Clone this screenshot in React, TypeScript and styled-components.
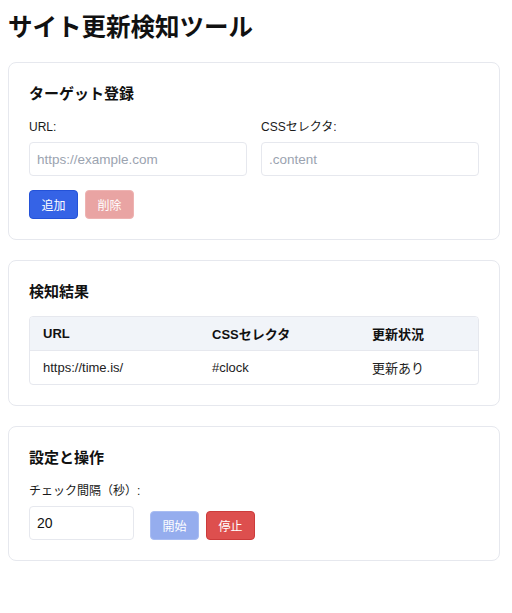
import styled, { createGlobalStyle } from "styled-components";

const GlobalStyle = createGlobalStyle`
    body {
        margin: 8px;
        background: #fff;
        color: #111;
        font-family: "Liberation Sans", "Noto Sans CJK JP", sans-serif;
    }
    * {
        box-sizing: border-box;
    }
`;

const Page = styled.main`
    width: 492px;
`;

const Title = styled.h1`
    font-size: 24.5px;
    font-weight: 700;
    line-height: 34px;
    margin: 3px 0 17px;
`;

const Card = styled.section`
    border: 1px solid #e6e8ee;
    border-radius: 8px;
    padding: 20px;
    margin-bottom: 20px;
`;

const CardTitle = styled.h2`
    font-size: 15px;
    font-weight: 700;
    line-height: 22px;
    margin: 0 0 13px;
`;

const FieldGrid = styled.div`
    display: grid;
    grid-template-columns: 1fr 1fr;
    gap: 14px;
`;

const Field = styled.div`
    display: flex;
    flex-direction: column;
    gap: 6px;
`;

const Label = styled.label`
    font-size: 12px;
    line-height: 18px;
    color: #1a1a1a;
`;

const Input = styled.input<{ $width?: number }>`
    height: 34px;
    width: ${({ $width }) => ($width ? `${$width}px` : "100%")};
    border: 1px solid #e6e8ee;
    border-radius: 4px;
    padding: 0 7px;
    font-size: 13.5px;
    font-family: inherit;
    color: #111;
    background: #fff;
    outline: none;

    &::placeholder {
        color: #9ba3b0;
    }
`;

const IntervalInput = styled(Input)`
    margin-right: 9px;
    font-size: 14px;
`;

const ButtonRow = styled.div<{ $top?: number }>`
    display: flex;
    align-items: flex-end;
    gap: 7px;
    margin-top: ${({ $top }) => $top ?? 0}px;
`;

const colors = {
    blue: { bg: "#3563e6", border: "#2452d8" },
    red: { bg: "#dd4f4e", border: "#cc3b3b" },
    blueOff: { bg: "#95adee", border: "#a9bdf2" },
    redOff: { bg: "#e9a4a3", border: "#eeb3b2" },
};

const Button = styled.button<{ $tone: keyof typeof colors }>`
    height: 29px;
    width: 49px;
    padding: 0;
    border-radius: 4px;
    border: 1px solid ${({ $tone }) => colors[$tone].border};
    background: ${({ $tone }) => colors[$tone].bg};
    color: #fff;
    font-size: 12px;
    font-family: inherit;
    cursor: pointer;

    &:disabled {
        cursor: default;
    }
`;

const Table = styled.table`
    width: 100%;
    border-collapse: separate;
    border-spacing: 0;
    border: 1px solid #e6e8ee;
    border-radius: 4px;
    overflow: hidden;
`;

const Th = styled.th<{ $w?: number }>`
    text-align: left;
    font-size: 13px;
    font-weight: 700;
    background: #f1f4f9;
    padding: 0 13px;
    height: 34px;
    border-bottom: 1px solid #e6e8ee;
    width: ${({ $w }) => ($w ? `${$w}px` : "auto")};
`;

const Td = styled.td`
    padding: 0 13px;
    height: 33px;
    font-size: 13px;
    color: #222;
`;

const App = () => {
    return (
        <Page>
            <GlobalStyle />
            <Title>サイト更新検知ツール</Title>

            <Card>
                <CardTitle>ターゲット登録</CardTitle>
                <FieldGrid>
                    <Field>
                        <Label>URL:</Label>
                        <Input placeholder="https://example.com" />
                    </Field>
                    <Field>
                        <Label>CSSセレクタ:</Label>
                        <Input placeholder=".content" />
                    </Field>
                </FieldGrid>
                <ButtonRow $top={14}>
                    <Button $tone="blue">追加</Button>
                    <Button $tone="redOff" disabled>削除</Button>
                </ButtonRow>
            </Card>

            <Card>
                <CardTitle>検知結果</CardTitle>
                <Table>
                    <thead>
                        <tr>
                            <Th $w={169}>URL</Th>
                            <Th $w={160}>CSSセレクタ</Th>
                            <Th>更新状況</Th>
                        </tr>
                    </thead>
                    <tbody>
                        <tr>
                            <Td>https://time.is/</Td>
                            <Td>#clock</Td>
                            <Td>更新あり</Td>
                        </tr>
                    </tbody>
                </Table>
            </Card>

            <Card>
                <CardTitle>設定と操作</CardTitle>
                <Field>
                    <Label>チェック間隔（秒）:</Label>
                    <ButtonRow>
                        <IntervalInput $width={105} type="number" defaultValue={20} />
                        <Button $tone="blueOff" disabled>開始</Button>
                        <Button $tone="red">停止</Button>
                    </ButtonRow>
                </Field>
            </Card>
        </Page>
    );
};

export default App;
